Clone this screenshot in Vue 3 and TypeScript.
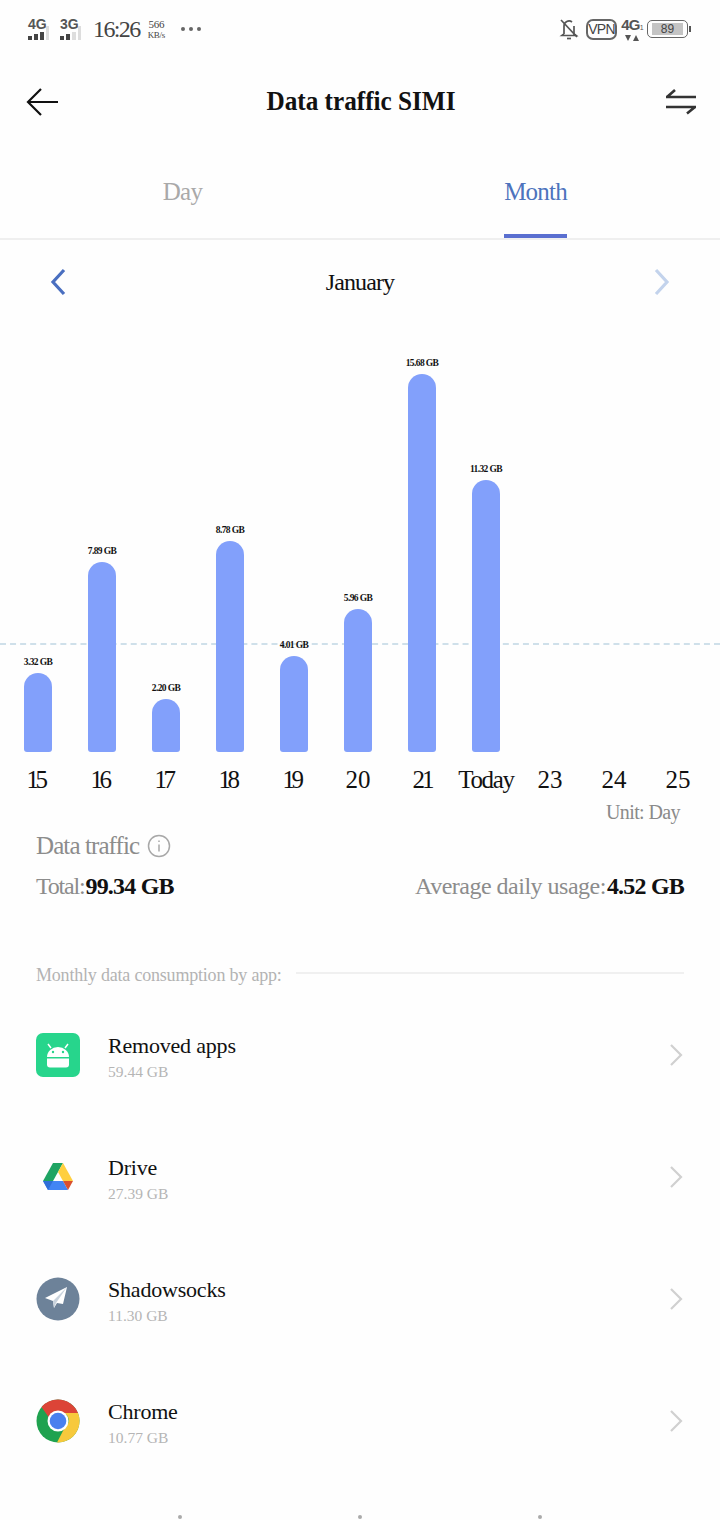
<script setup lang="ts">
const bars = [
  { day: '15', value: '3.32 GB', h: 79 },
  { day: '16', value: '7.89 GB', h: 190 },
  { day: '17', value: '2.20 GB', h: 53 },
  { day: '18', value: '8.78 GB', h: 211 },
  { day: '19', value: '4.01 GB', h: 96 },
  { day: '20', value: '5.96 GB', h: 143 },
  { day: '21', value: '15.68 GB', h: 378 },
  { day: 'Today', value: '11.32 GB', h: 272 },
  { day: '23', value: '', h: 0 },
  { day: '24', value: '', h: 0 },
  { day: '25', value: '', h: 0 },
]
const apps = [
  { name: 'Removed apps', size: '59.44 GB', icon: 'android' },
  { name: 'Drive', size: '27.39 GB', icon: 'drive' },
  { name: 'Shadowsocks', size: '11.30 GB', icon: 'shadow' },
  { name: 'Chrome', size: '10.77 GB', icon: 'chrome' },
]
</script>

<template>
  <div class="page">
    <div class="status">
      <div class="status-left">
        <div class="sig"><span class="sig-t">4G</span><span class="bars"><i></i><i></i><i></i><i class="off"></i></span></div>
        <div class="sig"><span class="sig-t">3G</span><span class="bars"><i></i><i></i><i class="off"></i><i class="off"></i></span></div>
        <span class="clock">16:26</span>
        <span class="speed"><span class="speed-n">566</span><span>KB/s</span></span>
        <span class="more"><i></i><i></i><i></i></span>
      </div>
      <div class="status-right">
        <svg width="20" height="24" viewBox="0 0 20 24" fill="none" stroke="#555" stroke-width="1.700">
          <path d="M5 17V9a5 5 0 0 1 8-4M15 9v8l2 1.500H3L5 17" />
          <path d="M2 3l16 17" />
          <path d="M8 21.500h4" />
        </svg>
        <span class="vpn">VPN</span>
        <div class="net"><span class="net-t">4G<small>1</small></span><span class="net-a"><svg width="14" height="6" viewBox="0 0 14 6" fill="#555"><path d="M0 0h6L3 6zM8 6h6l-3-6z" /></svg></span></div>
        <div class="battery"><div class="battery-body"><span>89</span></div><i></i></div>
      </div>
    </div>

    <header class="head">
      <svg class="back" width="34" height="30" viewBox="0 0 34 30" fill="none" stroke="#111" stroke-width="2.200">
        <path d="M16 2L3 15l13 13M3 15h30" />
      </svg>
      <h1>Data traffic SIMI</h1>
      <svg class="swap" width="32" height="28" viewBox="0 0 32 28" fill="none" stroke="#333" stroke-width="2.600">
        <path d="M1 10h30M10 3l-8 7M1 20h30M22 26.500l8-6.500" />
      </svg>
    </header>

    <nav class="tabs">
      <div class="tab"><span>Day</span></div>
      <div class="tab active"><span>Month</span></div>
    </nav>

    <div class="month">
      <svg width="18" height="28" viewBox="0 0 18 28" fill="none" stroke="#4a6fc0" stroke-width="3.200"><path d="M15 2L4 14l11 12" /></svg>
      <span>January</span>
      <svg width="18" height="28" viewBox="0 0 18 28" fill="none" stroke="#c3d3ec" stroke-width="3.200"><path d="M3 2l11 12L3 26" /></svg>
    </div>

    <section class="chart">
      <div class="avg"></div>
      <div v-for="b in bars" :key="b.day" class="col">
        <span v-if="b.value" class="val">{{ b.value }}</span>
        <div v-if="b.h" class="bar" :style="{ height: b.h + 'px' }"></div>
      </div>
    </section>
    <div class="days">
      <span v-for="b in bars" :key="b.day" :class="{ narrow: b.day.includes('1'), lead: b.day.startsWith('1'), word: b.day === 'Today' }">{{ b.day }}</span>
    </div>
    <div class="unit">Unit: Day</div>

    <section class="summary">
      <div class="sum-title">
        <span>Data traffic</span>
        <svg width="24" height="24" viewBox="0 0 24 24" fill="none" stroke="#a8a8a8" stroke-width="1.500">
          <circle cx="12" cy="12" r="10.500" />
          <path d="M12 10.500v7M12 6.500v1.500" />
        </svg>
      </div>
      <div class="sum-row">
        <span><span class="total-l">Total:</span><b>99.34 GB</b></span>
        <span><span class="avg-l">Average daily usage:</span><b>4.52 GB</b></span>
      </div>
    </section>

    <div class="by-app">
      <span>Monthly data consumption by app:</span>
      <i></i>
    </div>

    <ul class="apps">
      <li v-for="a in apps" :key="a.name">
        <svg v-if="a.icon === 'android'" class="ic" viewBox="0 0 44 44">
          <rect width="44" height="44" rx="7" fill="#27d58c" />
          <path d="M11 24a11 10 0 0 1 22 0z" fill="#fff" />
          <path d="M15 15l-3-4M29 15l3-4" stroke="#fff" stroke-width="1.500" />
          <circle cx="17" cy="19" r="1.200" fill="#27d58c" />
          <circle cx="27" cy="19" r="1.200" fill="#27d58c" />
          <path d="M11 25.500h22v6a3 3 0 0 1-3 3H14a3 3 0 0 1-3-3z" fill="#fff" />
        </svg>
        <svg v-else-if="a.icon === 'drive'" class="ic" viewBox="0 0 44 44">
          <path d="M17 8h10L17 26H7z" fill="#1fa463" />
          <path d="M27 8l10 18H27L22 17z" fill="#ffcf3f" />
          <path d="M7 26l5 9h20l-5-9z" fill="#4285f4" />
          <path d="M37 26H27l5 9z" fill="#d9502e" />
          <path d="M17 26l-5 9-5-9z" fill="#2f6fd8" />
        </svg>
        <svg v-else-if="a.icon === 'shadow'" class="ic" viewBox="0 0 44 44">
          <circle cx="22" cy="22" r="21.500" fill="#6d8299" />
          <path d="M31 10L9 21l8 3 1 7 3-5 6 1z" fill="#fff" />
          <path d="M31 10L17 24l1 7 2-5z" fill="#c9d3dd" />
        </svg>
        <svg v-else class="ic" viewBox="0 0 44 44">
          <circle cx="22" cy="22" r="21.500" fill="#1fa24f" />
          <path d="M22 .500A21.500 21.500 0 0 1 42 14H22a8 8 0 0 0-8 6L5.500 8A21.500 21.500 0 0 1 22 .500z" fill="#dc4437" />
          <path d="M42 14a21.500 21.500 0 0 1-21 29.500L29 28a8 8 0 0 0-1-14z" fill="#f7c93c" />
          <circle cx="22" cy="22" r="10.500" fill="#fff" />
          <circle cx="22" cy="22" r="8.300" fill="#4a80ee" />
        </svg>
        <div class="app-text">
          <div class="app-name">{{ a.name }}</div>
          <div class="app-size">{{ a.size }}</div>
        </div>
        <svg class="chev" width="16" height="26" viewBox="0 0 16 26" fill="none" stroke="#d0d0d0" stroke-width="2.200"><path d="M3 3l10 10L3 23" /></svg>
      </li>
    </ul>

    <div class="dots"><i></i><i></i><i></i></div>
  </div>
</template>

<style>
html, body { margin: 0; background: #fff; }
</style>

<style scoped>
.page { width: 720px; height: 1520px; overflow: hidden; background: #fefefe; font-family: "Liberation Serif", serif; color: #111; position: relative; }
.status { height: 58px; box-sizing: border-box; padding: 0 29px 0 28px; display: flex; justify-content: space-between; align-items: center; }
.status-left, .status-right { display: flex; align-items: center; }
.sig { display: flex; flex-direction: column; align-items: flex-start; width: 32px; color: #555; }
.sig-t { font: bold 14px/13px "Liberation Sans", sans-serif; }
.bars { display: flex; align-items: flex-end; gap: 2px; margin-top: 1px; height: 8px; }
.bars i { width: 4px; height: 6px; background: #444; }
.bars i:nth-child(1) { height: 4px; }
.bars i:nth-child(2) { height: 6px; }
.bars i:nth-child(3) { height: 8px; }
.bars i:nth-child(4) { height: 14px; width: 3px; }
.bars i.off { background: #ddd; }
.clock { font-size: 24px; color: #444; margin-left: 1px; letter-spacing: -1.600px; }
.speed { display: flex; flex-direction: column; font-size: 9px; line-height: 10px; color: #444; margin-left: 8px; align-items: center; letter-spacing: -.3px; }
.speed-n { font-size: 11px; line-height: 12px; }
.more { display: flex; gap: 4px; margin-left: 16px; }
.more i { width: 4px; height: 4px; border-radius: 50%; background: #666; }
.status-right svg { display: block; }
.status-right { gap: 5px; }
.vpn { border: 2px solid #666; border-radius: 7px; font: 14px/17px "Liberation Sans", sans-serif; letter-spacing: -.7px; color: #444; margin-left: 2px; width: 27px; text-align: center; }
.net { display: flex; flex-direction: column; align-items: center; width: 20px; color: #555; }
.net-t { font: bold 15px/15px "Liberation Sans", sans-serif; white-space: nowrap; letter-spacing: -.8px; }
.net-t small { font-size: 7px; font-weight: normal; }
.net-a { line-height: 6px; height: 6px; }
.battery { display: flex; align-items: center; }
.battery-body { width: 41px; height: 18px; box-sizing: border-box; border: 1px solid #666; border-radius: 5px; padding: 2px 4px; }
.battery-body span { display: block; height: 100%; background: #c4c4c4; font: 12px/12px "Liberation Sans", sans-serif; text-align: center; color: #444; }
.battery i { width: 2px; height: 6px; background: #555; margin-left: 1px; }

.head { height: 86px; display: grid; grid-template-columns: 1fr auto 1fr; align-items: center; padding: 0 23px 0 25px; box-sizing: border-box; }
.head h1 { margin: 0; font-size: 28px; font-weight: bold; color: #111; transform: scaleX(.9); }
.back { display: block; justify-self: start; margin-top: 2px; }
.swap { display: block; justify-self: end; }

.tabs { height: 94px; display: grid; grid-template-columns: 1fr 1fr; padding: 0 8px 0 6px; border-bottom: 2px solid #efefef; }
.tab { display: flex; justify-content: center; }
.tab span { font-size: 25px; line-height: 32px; letter-spacing: -.8px; color: #a9a9a9; padding: 32px 0 0; height: 62px; }
.tab.active span { color: #4d73bd; border-bottom: 4px solid #5a6fd0; height: 58px; margin-bottom: -2px; }

.month { height: 84px; box-sizing: border-box; display: flex; justify-content: space-between; align-items: center; padding: 0 49px; font-size: 24px; color: #111; }
.month span { flex: 1; text-align: center; letter-spacing: -.9px; }

.chart { position: relative; height: 428px; margin: 0 6px; display: grid; grid-template-columns: repeat(11, 64px); align-items: end; }
.avg { position: absolute; left: -6px; width: 720px; bottom: 107px; border-top: 2px dashed #cfe0ea; }
.col { display: flex; flex-direction: column; align-items: center; position: relative; }
.val { font-size: 9.500px; line-height: 12px; font-weight: bold; letter-spacing: -.6px; color: #111; margin-bottom: 5px; white-space: nowrap; }
.bar { width: 28px; background: #82a0fb; border-radius: 14px 14px 3px 3px; }

.days { margin: 12px 6px 0; display: grid; grid-template-columns: repeat(11, 64px); font-size: 25px; line-height: 32px; text-align: center; color: #111; }
.days .narrow { letter-spacing: -3px; }
.days .lead { letter-spacing: -3.500px; padding-right: 5px; }
.days .word { letter-spacing: -1.300px; }
.unit { text-align: right; padding-right: 40px; font-size: 20px; line-height: 26px; letter-spacing: -.6px; color: #8a8a8a; margin-top: 3px; }

.summary { padding: 0 36px; margin-top: 4px; }
.sum-title { display: flex; align-items: center; gap: 8px; font-size: 25px; line-height: 34px; letter-spacing: -.9px; color: #8c8c8c; }
.sum-row { display: flex; justify-content: space-between; margin-top: 6px; font-size: 24px; line-height: 34px; color: #8c8c8c; }
.sum-row b { color: #111; letter-spacing: -.8px; margin-left: 1px; }
.total-l { letter-spacing: -1.200px; }
.avg-l { letter-spacing: -.5px; }

.by-app { display: flex; align-items: center; gap: 14px; padding: 0 36px; margin-top: 60px; font-size: 18px; line-height: 24px; letter-spacing: -.2px; color: #b3b3b3; }
.by-app i { flex: 1; height: 2px; background: #f0f0f0; margin-top: -4px; }

.apps { list-style: none; margin: 0; padding: 0 36px; margin-top: 7px; }
.apps li { height: 122px; display: flex; align-items: center; }
.ic { width: 44px; height: 44px; display: block; }
.app-text { flex: 1; margin-left: 28px; padding-top: 3px; }
.app-name { font-size: 22px; line-height: 30px; color: #111; letter-spacing: -.2px; }
.app-size { font-size: 15.500px; line-height: 22px; color: #b5b5b5; }

.dots { position: absolute; left: 90px; right: 90px; bottom: 1px; display: grid; grid-template-columns: repeat(3, 1fr); justify-items: center; }
.dots i { width: 4px; height: 4px; border-radius: 50%; background: #aaa; }
</style>
